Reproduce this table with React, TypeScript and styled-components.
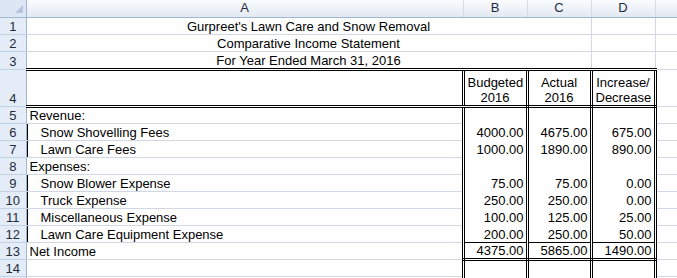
import styled, { createGlobalStyle, css } from 'styled-components';

const GlobalStyle = createGlobalStyle`
  html, body {
    margin: 0;
    padding: 0;
    background: #fff;
    overflow: hidden;
  }
  body {
    font-family: 'Liberation Sans', Arial, sans-serif;
  }
`;

const GRID = '#d0d7e5';
const HEAD_EDGE = '#9eb6ce';

type Line = 'double' | 'single';

const line = (kind: Line) => (kind === 'double' ? '3px double #000' : '1px solid #000');

// the window only shows part of the sheet, the rest is clipped
const Viewport = styled.div`
  width: 677px;
  height: 278px;
  overflow: hidden;
`;

const Sheet = styled.table`
  border-collapse: collapse;
  table-layout: fixed;
  width: 755px;
  font-family: 'Liberation Sans', Arial, sans-serif;
  font-size: 13px;
  color: #000;
`;

const HeadRow = styled.tr`
  height: 17px;
`;

const Row = styled.tr<{ $h?: number }>`
  height: ${p => p.$h ?? 17}px;
`;

const ColHead = styled.th`
  padding: 0;
  font-weight: normal;
  line-height: 16px;
  text-align: center;
  color: #1f2b3c;
  background: linear-gradient(#f9fbfd, #e3e9f2);
  border-right: 1px solid #d5dde8;
  border-bottom: 1px solid ${HEAD_EDGE};
`;

const Corner = styled(ColHead)`
  background: #dce6f4;
  border-right: 1px solid ${HEAD_EDGE};
`;

const CornerMark = styled.div`
  display: flex;
  justify-content: flex-end;
  align-items: flex-end;
  height: 16px;
  padding: 0 3px 3px 0;
  box-sizing: border-box;
`;

const RowHead = styled.th`
  padding: 0;
  font-weight: normal;
  line-height: 15px;
  text-align: center;
  vertical-align: bottom;
  color: #1f2b3c;
  background: #e4ecf7;
  border-right: 1px solid ${HEAD_EDGE};
  border-bottom: 1px solid #c3d1e4;
`;

const Cell = styled.td<{
  $align?: 'left' | 'center' | 'right';
  $indent?: boolean;
  $frame?: boolean;
  $bottom?: Line;
  $rule?: boolean;
}>`
  padding: 0 ${p => (p.$align === 'right' ? 2 : 3)}px 0 ${p => (p.$indent ? 14 : 3)}px;
  line-height: 15px;
  vertical-align: bottom;
  white-space: nowrap;
  text-align: ${p => p.$align ?? 'left'};
  border: 1px solid ${GRID};

  ${p =>
    p.$frame &&
    css`
      background: #fff;
      border-left: 3px double #000;
      border-right: 3px double #000;
      border-top: none;
      border-bottom: none;
    `}

  ${p =>
    p.$bottom &&
    css`
      border-bottom: ${line(p.$bottom)};
    `}

  ${p =>
    p.$rule &&
    css`
      box-shadow: inset 1px 0 0 #000;
    `}
`;

type Entry = {
  label: string;
  indent?: boolean;
  values?: [string, string, string];
  bottom?: Line;
};

const entries: Entry[] = [
  { label: 'Revenue:' },
  { label: 'Snow Shovelling Fees', indent: true, values: ['4000.00', '4675.00', '675.00'] },
  { label: 'Lawn Care Fees', indent: true, values: ['1000.00', '1890.00', '890.00'] },
  { label: 'Expenses:' },
  { label: 'Snow Blower Expense', indent: true, values: ['75.00', '75.00', '0.00'] },
  { label: 'Truck Expense', indent: true, values: ['250.00', '250.00', '0.00'] },
  { label: 'Miscellaneous Expense', indent: true, values: ['100.00', '125.00', '25.00'] },
  {
    label: 'Lawn Care Equipment Expense',
    indent: true,
    values: ['200.00', '250.00', '50.00'],
    bottom: 'single',
  },
  { label: 'Net Income', values: ['4375.00', '5865.00', '1490.00'], bottom: 'double' },
  { label: '' },
];

const titles = [
  "Gurpreet's Lawn Care and Snow Removal",
  'Comparative Income Statement',
  'For Year Ended March 31, 2016',
];

const headings: [string, string][] = [
  ['Budgeted', '2016'],
  ['Actual', '2016'],
  ['Increase/', 'Decrease'],
];

export default function App() {
  return (
    <>
      <GlobalStyle />
      <Viewport>
        <Sheet>
          <colgroup>
            <col style={{ width: 26 }} />
            <col style={{ width: 437 }} />
            <col style={{ width: 64 }} />
            <col style={{ width: 64 }} />
            <col style={{ width: 64 }} />
            <col style={{ width: 100 }} />
          </colgroup>
          <tbody>
            <HeadRow>
              <Corner>
                <CornerMark>
                  <svg width="8" height="8" viewBox="0 0 8 8">
                    <path d="M8 0 L8 8 L0 8 Z" fill="#b3c4db" />
                  </svg>
                </CornerMark>
              </Corner>
              <ColHead>A</ColHead>
              <ColHead>B</ColHead>
              <ColHead>C</ColHead>
              <ColHead>D</ColHead>
              <ColHead />
            </HeadRow>

            {titles.map((t, i) => (
              <Row key={t} $h={i === 2 ? 18 : 17}>
                <RowHead>{i + 1}</RowHead>
                <Cell colSpan={3} $align="center" $bottom={i === 2 ? 'double' : undefined}>
                  {t}
                </Cell>
                <Cell $bottom={i === 2 ? 'double' : undefined} />
                <Cell />
              </Row>
            ))}

            <Row $h={37}>
              <RowHead>4</RowHead>
              <Cell $bottom="double" />
              {headings.map(([a, b]) => (
                <Cell key={a} $frame $align="center" $bottom="double">
                  {a}
                  <br />
                  {b}
                </Cell>
              ))}
              <Cell />
            </Row>

            {entries.map((e, i) => (
              <Row key={i}>
                <RowHead>{i + 5}</RowHead>
                <Cell $indent={e.indent} $rule={e.indent}>
                  {e.label}
                </Cell>
                {[0, 1, 2].map(k => (
                  <Cell key={k} $frame $align="right" $bottom={e.bottom}>
                    {e.values?.[k]}
                  </Cell>
                ))}
                <Cell />
              </Row>
            ))}

            {/* next row only peeks in under the bottom edge */}
            <Row>
              <RowHead />
              <Cell />
              <Cell $frame />
              <Cell $frame />
              <Cell $frame />
              <Cell />
            </Row>
          </tbody>
        </Sheet>
      </Viewport>
    </>
  );
}
